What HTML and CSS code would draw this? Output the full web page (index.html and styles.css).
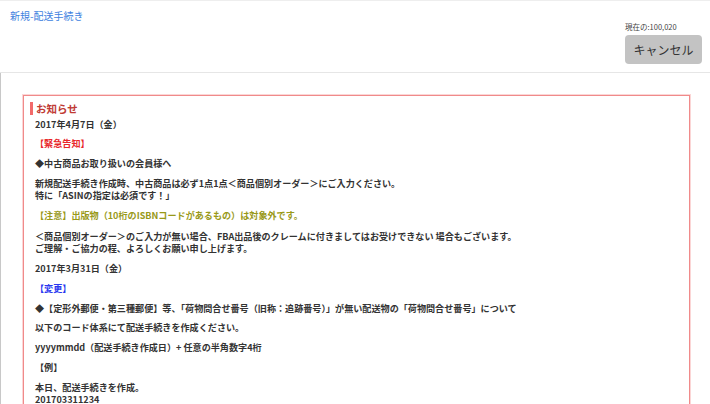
FILE: index.html
```html
<!DOCTYPE html>
<html lang="ja">
<head>
    <meta charset="UTF-8">
    <meta name="viewport" content="width=device-width, initial-scale=1.0">
    <title>新規-配送手続き</title>
    <link rel="stylesheet" href="styles.css">
</head>
<body>
    <header class="topbar">
        <h1 class="page-title">新規-配送手続き</h1>
        <div class="actions">
            <span class="balance">現在の:100,020</span>
            <button class="btn-cancel" type="button">キャンセル</button>
        </div>
    </header>

    <main class="content">
        <section class="notice">
            <h2 class="notice-title">お知らせ</h2>
            <p class="date">2017年4月7日（金）</p>
            <p class="tag-red">【緊急告知】</p>
            <p>◆中古商品お取り扱いの会員様へ</p>
            <p>新規配送手続き作成時、中古商品は必ず1点1点＜商品個別オーダー＞にご入力ください。<br>特に「ASINの指定は必須です！」</p>
            <p class="tag-olive">【注意】出版物（10桁のISBNコードがあるもの）は対象外です。</p>
            <p class="spaced">＜商品個別オーダー＞のご入力が無い場合、FBA出品後のクレームに付きましてはお受けできない 場合もございます。<br>ご理解・ご協力の程、よろしくお願い申し上げます。</p>
            <p>2017年3月31日（金）</p>
            <p class="tag-blue">【変更】</p>
            <p>◆【定形外郵便・第三種郵便】等、「荷物問合せ番号（旧称：追跡番号）」が無い配送物の「荷物問合せ番号」について</p>
            <p>以下のコード体系にて配送手続きを作成ください。</p>
            <p>yyyymmdd（配送手続き作成日）+ 任意の半角数字4桁</p>
            <p>【例】</p>
            <p>本日、配送手続きを作成。<br>201703311234<br>このコード体系で配送手続きを作成時に「荷物問合せ番号（旧称：追跡番号）欄」にご入力いただき、同じ番号を定形外郵便の宛名にもご記入ください。</p>
        </section>
    </main>
</body>
</html>
```

FILE: styles.css
```css
body {
    margin: 0;
    background: #fff;
    color: #333;
    font-family: "Noto Sans CJK JP", "Noto Sans", "Liberation Sans", sans-serif;
}

/* EN-TETE */
.topbar {
    display: flex;
    justify-content: space-between;
    align-items: flex-start;
    height: 71px;
    border-top: 1px solid #eee;
    border-bottom: 1px solid #e6e6e6;
}

.page-title {
    margin: 9px 0 0 10px;
    font-size: 10px;
    line-height: 12px;
    font-weight: normal;
    color: #3d7fe0;
}

.actions {
    display: flex;
    flex-direction: column;
    align-items: flex-start;
    margin: 21px 8px 0 0;
}

.balance {
    font-size: 7.5px;
    line-height: 10px;
    color: #444;
}

.btn-cancel {
    margin-top: 3px;
    width: 77px;
    height: 29px;
    border: none;
    border-radius: 4px;
    background: #c3c3c3;
    color: #333;
    font-family: inherit;
    font-size: 12px;
    cursor: pointer;
}

/* CONTENU */
.content {
    border-left: 1px solid #c8c8c8;
    padding: 22px 20px 0 22px;
}

.notice {
    border: 1px solid #f08a8a;
    box-shadow: 0 0 0 1px #fbd6d6;
    padding: 6px 12px 0 11px;
    font-size: 9.1px;
    font-weight: bold;
    line-height: 12px;
}

.notice-title {
    margin: 0 0 2.5px -5px;
    padding-left: 3px;
    border-left: 3px solid #f26a6a;
    font-size: 10.5px;
    line-height: 13px;
    color: #c03a34;
}

.notice p {
    margin: 0 0 7.8px;
}

.notice .spaced {margin-top: 9.5px;}

.tag-red {color: #e8262a;}
.tag-olive {color: #999918;}
.tag-blue {color: #2a37f0;}
```
